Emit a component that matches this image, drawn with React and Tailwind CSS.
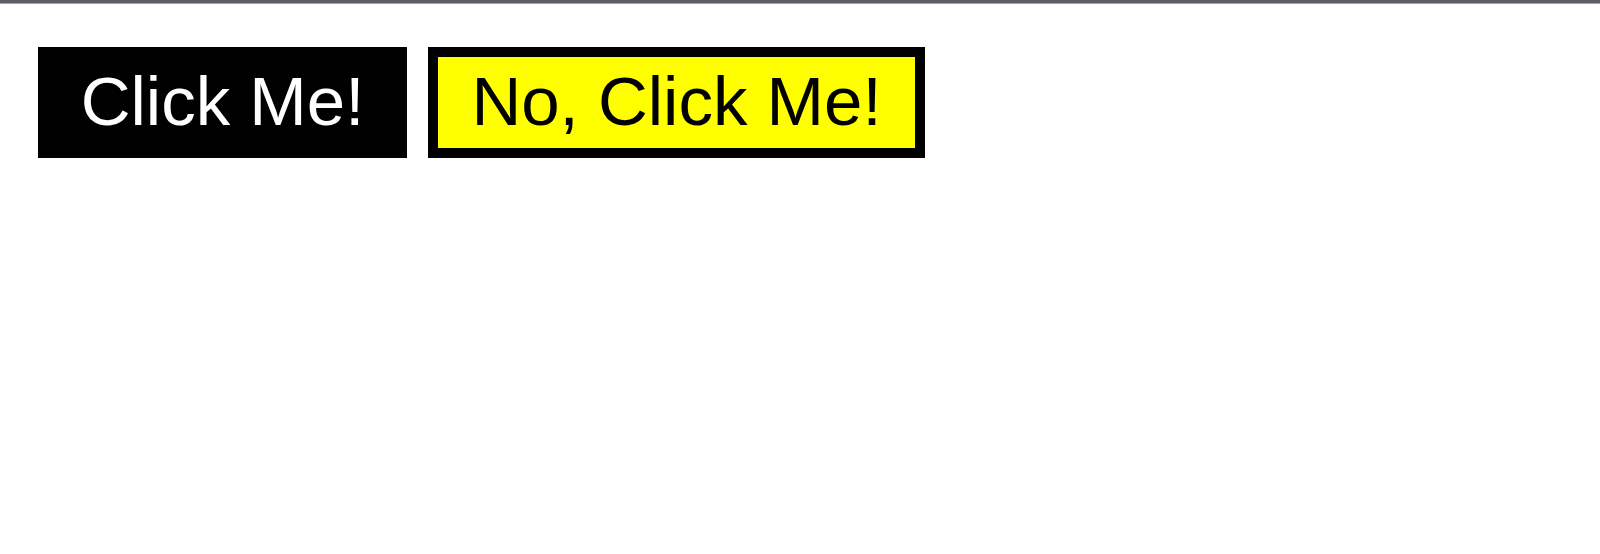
import React from 'react';

export default function App() {
  return (
    <div className="min-h-[554px] bg-white" style={{ fontFamily: '"Liberation Sans", Arial, sans-serif' }}>
      {/* browser chrome edge */}
      <div className="h-[3px] bg-[#5c5d64]" />
      <div className="h-px bg-[#a3a4a8]" />

      <div className="flex items-start gap-[21px] pl-[38px] pt-[43px]">
        <button className="w-[369px] bg-black text-white text-[69px] leading-[81px] pt-[14px] pb-[16px] text-center whitespace-nowrap">
          Click Me!
        </button>
        <button className="w-[497px] bg-[#ffff00] text-black border-[10px] border-black text-[69px] leading-[81px] pt-[4px] pb-[6px] text-center whitespace-nowrap">
          No, Click Me!
        </button>
      </div>
    </div>
  );
}
